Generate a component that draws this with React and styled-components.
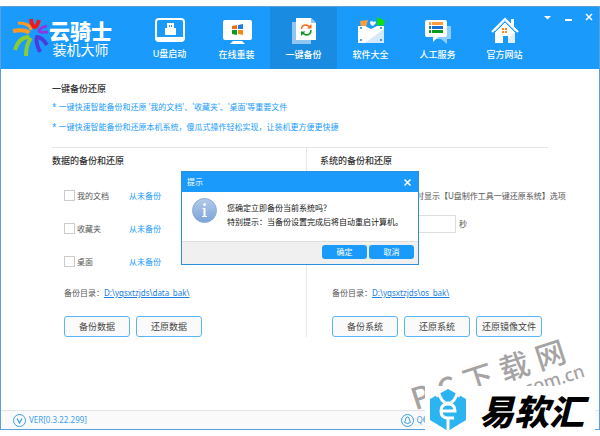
import styled, { createGlobalStyle } from 'styled-components';

const GlobalStyle = createGlobalStyle`
  * {
    box-sizing: border-box;
  }

  body {
    margin: 0;
    background-color: #fff;
    color: #555;
    font-family: 'Noto Sans', 'Noto Sans CJK SC', sans-serif;
    font-size: 8px;
    line-height: 12px;
  }

  button,
  input {
    font-family: inherit;
  }
`;

const Page = styled.div`
  position: relative;
  padding: 6px 0;
  overflow: hidden;
`;

const Window = styled.div`
  position: relative;
  display: flex;
  flex-direction: column;
  border: 1px solid #5aa0dc;
  background-color: #fff;
`;

const Header = styled.header`
  display: flex;
  height: 62px;
  background-color: #1a9bfb;
  color: #fff;
`;

const Brand = styled.div`
  display: flex;
  align-items: center;
  width: 135px;
  padding-left: 11px;
`;

const BrandName = styled.div`
  display: flex;
  flex-direction: column;
  align-items: center;
`;

const BrandTitle = styled.strong`
  font-family: 'Noto Sans CJK SC', sans-serif;
  font-size: 21px;
  font-weight: 900;
  line-height: 22px;
`;

const BrandSubtitle = styled.span`
  font-family: 'Noto Sans CJK SC', sans-serif;
  font-size: 14px;
  line-height: 16px;
`;

const Nav = styled.nav`
  display: flex;
`;

const NavItem = styled.a`
  display: flex;
  flex-direction: column;
  align-items: center;
  gap: 5px;
  width: 67px;
  padding-top: 8px;
  background-color: ${({ $active }) => ($active ? '#198be0' : 'transparent')};
  color: #fff;
  font-size: 9px;
  font-weight: 500;
  line-height: 12px;
  text-decoration: none;
`;

const WindowControls = styled.div`
  display: flex;
  gap: 9px;
  margin-left: auto;
  padding: 4px 4px 0 0;
`;

const ControlButton = styled.button`
  display: flex;
  padding: 0;
  border: 0;
  background: none;
  color: #fff;
`;

const Content = styled.main`
  min-height: 341px;
  padding: 14px 51px 0;
`;

const Title = styled.h1`
  margin: 0 0 2px;
  color: #333;
  font-size: 9px;
  font-weight: 500;
  line-height: 12px;
`;

const Tips = styled.ul`
  margin: 0 0 10px;
  padding: 0;
  list-style: none;
  color: #1a9bfb;
  line-height: 20px;
`;

const Columns = styled.div`
  display: flex;
  border-top: 1px solid #e4e4e4;
`;

const Column = styled.section`
  display: flex;
  flex-direction: column;
  flex: ${({ $grow }) => $grow};
  min-width: 0;
  white-space: nowrap;

  & + & {
    padding-left: 13px;
    border-left: 1px solid #e8e8e8;
  }
`;

const ColumnTitle = styled.h2`
  margin: 5px 0 10px;
  color: #333;
  font-size: 9px;
  font-weight: 500;
  line-height: 16px;
`;

const ColumnBody = styled.div`
  display: flex;
  flex-direction: column;
  flex: 1;
  padding-left: 12px;
`;

const Row = styled.div`
  display: flex;
  align-items: center;
  height: ${({ $compact }) => ($compact ? '23px' : '33px')};
`;

const CheckLabel = styled.label`
  display: flex;
  align-items: center;
  gap: 2px;
  min-width: 65px;
`;

const Checkbox = styled.input`
  width: 11px;
  height: 11px;
  margin: 0;
  appearance: none;
  border: 1px solid #ccc;
  background-color: #fff;
`;

const Status = styled.span`
  color: #1a9bfb;
`;

const DelayLabel = styled.label`
  margin-right: 4px;
`;

const DelayInput = styled.input`
  width: 80px;
  height: 18px;
  margin-right: 3px;
  border: 1px solid #ddd;
  font-size: 8px;
`;

const Directory = styled.p`
  margin: auto 0 8px;
  line-height: 30px;
`;

const DirectoryLink = styled.a`
  color: #1a80e6;
`;

const Actions = styled.div`
  display: flex;
  gap: 6px;
`;

const ActionButton = styled.button`
  width: 66px;
  height: 21px;
  padding: 0;
  border: 1px solid #5ab4f8;
  border-radius: 3px;
  background-color: #fafafa;
  color: #444;
  font-size: 9px;
  line-height: 12px;
`;

const Footer = styled.footer`
  display: flex;
  align-items: center;
  justify-content: space-between;
  height: 19px;
  padding: 0 162px 0 12px;
  border-top: 1px solid #e4e4e4;
  background-color: #fafafa;
  color: #3a9fee;
`;

const FooterItem = styled.span`
  display: flex;
  align-items: center;
  gap: 3px;
  font-size: 8px;
`;

const Overlay = styled.div`
  position: absolute;
  inset: 0;
  display: grid;
  place-items: center;
`;

const Dialog = styled.div`
  width: 238px;
  border: 1px solid #2d8fdc;
  background-color: #fff;
  color: #111;
`;

const DialogHeader = styled.div`
  display: flex;
  align-items: center;
  justify-content: space-between;
  height: 20px;
  padding: 0 6px 0 5px;
  background-color: #1a9bfb;
  color: #fff;
`;

const DialogBody = styled.div`
  display: flex;
  gap: 10px;
  height: 49px;
  padding: 6px 10px;
`;

const DialogMessage = styled.p`
  margin: 3px 0 0;
  line-height: 14px;
`;

const DialogFooter = styled.div`
  display: flex;
  justify-content: flex-end;
  gap: 2px;
  padding: 3px 4px 5px;
  border-top: 1px solid #ddd;
  background-color: #f0f0f0;
`;

const DialogButton = styled.button`
  width: 45px;
  height: 14px;
  padding: 0;
  border: 0;
  border-radius: 3px;
  background-color: #1a9bfb;
  color: #fff;
  font-size: 8px;
  line-height: 12px;
`;

const Watermark = styled.div`
  position: absolute;
  right: 17px;
  bottom: 29px;
  display: flex;
  flex-direction: column;
  align-items: flex-end;
  color: #a5a3a3;
  font-weight: 500;
  transform: rotate(-18deg);
  pointer-events: none;
`;

const WatermarkName = styled.div`
  display: flex;
  gap: 8px;
  padding-right: 12px;
  font-family: 'Noto Sans CJK SC', sans-serif;
  font-size: 30px;
  line-height: 32px;
`;

const WatermarkSite = styled.div`
  font-size: 18px;
  line-height: 20px;
`;

const Badge = styled.div`
  position: absolute;
  right: 5px;
  bottom: 0;
  display: flex;
  align-items: center;
  gap: 12px;
  width: 170px;
  height: 50px;
  padding: 0 0 2px 4px;
  background-color: #fff;
`;

const BadgeName = styled.strong`
  color: #000;
  font-family: 'Noto Sans CJK SC', sans-serif;
  font-size: 35px;
  font-style: italic;
  font-weight: 900;
  line-height: 40px;
  white-space: nowrap;
`;

const BrandMark = () => (
  <svg width="37" height="40" viewBox="12 18 37 40" fill="none">
    <path d="M31 19q1 8 4 8q2 0 4-7" stroke="#f01818" strokeWidth="4" />
    <path d="M18 23q12 0 13 7" stroke="#ff9820" strokeWidth="3" />
    <path d="M13 31q12-2 16 2" stroke="#ff9820" strokeWidth="4" />
    <path d="M47 26q-8 2-8 5q1 2 9 1" stroke="#8a3be0" strokeWidth="3" />
    <path d="M15 50q4-13 14-13" stroke="#8ccc30" strokeWidth="4" />
    <path d="M26 56q0-12 5-18" stroke="#8ccc30" strokeWidth="4" />
    <path d="M40 52q-5-11-3-15q5 0 10 8" stroke="#4a3be0" strokeWidth="4" />
  </svg>
);

const UsbIcon = () => (
  <svg width="30" height="28" viewBox="0 0 30 28">
    <rect x="1" y="4" width="28" height="22" rx="3" fill="none" stroke="#fff" strokeWidth="2" />
    <path d="M2 22h26v3a2 2 0 0 1-2 2H4a2 2 0 0 1-2-2z" fill="#fff" />
    <path d="M12 8h7v5h2v7H10v-7h2z" fill="#fff" />
    <path d="M14 10h1v2h-1zM16 10h1v2h-1z" fill="#1a9bfb" />
  </svg>
);

const MonitorIcon = () => (
  <svg width="30" height="29" viewBox="0 0 30 29">
    <rect x="1" y="5" width="29" height="20" rx="2" fill="#fff" />
    <path d="M11 26h9l3 3H8z" fill="#fff" />
    <path d="M10 11l5-1v4h-5z" fill="#f26a1b" />
    <path d="M16 10l5-1v5h-5z" fill="#1f7fd8" />
    <path d="M10 15h5v5l-5-1z" fill="#0a9a1e" />
    <path d="M16 15h5v5l-5-1z" fill="#f28a1b" />
  </svg>
);

const BackupIcon = () => (
  <svg width="26" height="29" viewBox="0 0 26 29">
    <path d="M1 7h19v22H1z" fill="#8fc6f2" />
    <path d="M5 3h15l5 5v17H5z" fill="#fff" />
    <path d="M20 3v5h5z" fill="#8fc6f2" />
    <path d="M10.500 14q0-4 5-4l3 1.500" fill="none" stroke="#f26a1b" strokeWidth="1.500" />
    <path d="M20.500 9v4.500H16z" fill="#f26a1b" />
    <path d="M20 15q0 5-5 5l-3-1.500" fill="none" stroke="#0a9a1e" strokeWidth="1.500" />
    <path d="M10 21v-4.500h4.500z" fill="#0a9a1e" />
  </svg>
);

const SoftwareIcon = () => (
  <svg width="28" height="29" viewBox="0 0 28 29">
    <path d="M3 6l8-1-2 7H4z" fill="#ff9e3a" />
    <path d="M20 2l8 4-2 5-6-1z" fill="#0be00b" />
    <path d="M13 7q2-2 3 0q3-2 3 1l-3 3q-3-1-3-4z" fill="#fff" />
    <path d="M1 11h7l6 3 6-3h7v17H1z" fill="#fff" />
    <path d="M27 14v14H8z" fill="#d5e9fa" />
    <g fill="#1a80d8">
      <circle cx="4" cy="13" r="1" />
      <circle cx="24" cy="13" r="1" />
      <circle cx="4" cy="25" r="1" />
      <circle cx="24" cy="25" r="1" />
    </g>
  </svg>
);

const ServiceIcon = () => (
  <svg width="28" height="29" viewBox="0 0 28 29">
    <path d="M23 11h4v13h-4v5l-6-5h-5v-4h11z" fill="#8fcbfb" />
    <path d="M3 5h18a2 2 0 0 1 2 2v13a2 2 0 0 1-2 2h-7l-5 5v-5H3a2 2 0 0 1-2-2V7a2 2 0 0 1 2-2z" fill="#fff" />
    <path d="M5 7h2v3H5zM8 7h11v3H8z" fill="#ff9e3a" />
    <path d="M5 11h2v3H5zM8 11h11v3H8z" fill="#1a6fd0" />
    <path d="M5 15h2v3H5zM8 15h11v3H8z" fill="#0a9a1e" />
  </svg>
);

const HomeIcon = () => (
  <svg width="28" height="29" viewBox="0 0 28 29">
    <path d="M20 4h3v8h-3z" fill="#fff" />
    <path d="M14 6L24 16v12H4V16z" fill="#fff" />
    <path d="M1 17L14 4l13 13" fill="none" stroke="#fff" strokeWidth="2" />
    <path d="M3 18L14 7l11 11" fill="none" stroke="#1a9bfb" />
    <path d="M24 17v11H12z" fill="#e2effa" />
    <path d="M12 21h5v7h-5z" fill="#1a9bfb" />
    <path d="M11 13h2v2h-2zM14 13h2v2h-2zM11 16h2v2h-2zM14 16h2v2h-2z" fill="#f28a1b" />
  </svg>
);

const CloseIcon = () => (
  <svg width="9" height="9" viewBox="0 0 9 9">
    <path d="M1.500 1.500l6 6M7.500 1.500l-6 6" stroke="#fff" strokeWidth="1.500" />
  </svg>
);

const InfoIcon = () => (
  <svg width="25" height="25" viewBox="0 0 25 25">
    <defs>
      <linearGradient id="info" x1="0" y1="0" x2="0" y2="1">
        <stop offset="0" stopColor="#b4cbea" />
        <stop offset="1" stopColor="#7ba3d8" />
      </linearGradient>
    </defs>
    <circle cx="12.5" cy="12.5" r="12" fill="url(#info)" stroke="#8cacd6" />
    <circle cx="12.5" cy="6.5" r="1.5" fill="#fff" />
    <path d="M10.500 10h3v8h1.500v1h-5v-1h1.500v-7h-1z" fill="#fff" />
  </svg>
);

const VersionIcon = () => (
  <svg width="13" height="13" viewBox="0 0 13 13" fill="none" stroke="#3a9fee">
    <circle cx="6.5" cy="6.5" r="6" />
    <path d="M4 4.500l2.500 4.500L9 4.500" strokeWidth="1.300" />
  </svg>
);

const ChatIcon = () => (
  <svg width="13" height="13" viewBox="0 0 13 13" fill="none" stroke="#3a9fee">
    <circle cx="6.500" cy="6.500" r="6" />
    <path d="M4.500 6q0-3 2-3t2 3l1 2.500-1.500.5q-1.500 1-3 0L3.500 8.500z" />
  </svg>
);

const BadgeMark = () => (
  <svg width="38" height="42" viewBox="0 0 38 42">
    <path d="M19 0l18 10v21L19 42 1 31V10z" fill="#2cb4f0" />
    <path d="M5 0l5 7M33 0l-5 7" stroke="#fff" strokeWidth="5" />
    <path d="M9 4l4 7 3 3h6l3-3 4-7" fill="none" stroke="#fff" strokeWidth="3" />
    <path d="M12 22h14q0-7-7-7t-7 7q0 7 7 7h6" fill="none" stroke="#fff" strokeWidth="3" />
    <path d="M19 29v13" stroke="#fff" strokeWidth="3" />
  </svg>
);

const navItems = [
  { label: 'U盘启动', Icon: UsbIcon },
  { label: '在线重装', Icon: MonitorIcon },
  { label: '一键备份', Icon: BackupIcon, active: true },
  { label: '软件大全', Icon: SoftwareIcon },
  { label: '人工服务', Icon: ServiceIcon },
  { label: '官方网站', Icon: HomeIcon },
];

const dataItems = ['我的文档', '收藏夹', '桌面'];

const App = () => {
  return (
    <Page>
      <GlobalStyle />
      <Window>
        <Header>
          <Brand>
            <BrandMark />
            <BrandName>
              <BrandTitle>云骑士</BrandTitle>
              <BrandSubtitle>装机大师</BrandSubtitle>
            </BrandName>
          </Brand>
          <Nav>
            {navItems.map(({ label, Icon, active }) => (
              <NavItem key={label} href="#" $active={active}>
                <Icon />
                {label}
              </NavItem>
            ))}
          </Nav>
          <WindowControls>
            <ControlButton aria-label="菜单">
              <svg width="12" height="12" viewBox="0 0 12 12">
                <path d="M3 5h7L6.500 8.500z" fill="#fff" />
              </svg>
            </ControlButton>
            <ControlButton aria-label="最小化">
              <svg width="12" height="12" viewBox="0 0 12 12">
                <path d="M3 8h7v2H3z" fill="#fff" />
              </svg>
            </ControlButton>
            <ControlButton aria-label="关闭">
              <svg width="12" height="12" viewBox="0 0 12 12">
                <path d="M3 3l6 6M9 3L3 9" stroke="#fff" strokeWidth="1.500" />
              </svg>
            </ControlButton>
          </WindowControls>
        </Header>

        <Content>
          <Title>一键备份还原</Title>
          <Tips>
            <li>* 一键快速智能备份和还原 '我的文档'、'收藏夹'、'桌面'等重要文件</li>
            <li>* 一键快速智能备份和还原本机系统，傻瓜式操作轻松实现，让装机更方便更快捷</li>
          </Tips>

          <Columns>
            <Column $grow={254}>
              <ColumnTitle>数据的备份和还原</ColumnTitle>
              <ColumnBody>
                {dataItems.map((item) => (
                  <Row key={item}>
                    <CheckLabel>
                      <Checkbox type="checkbox" />
                      {item}
                    </CheckLabel>
                    <Status>从未备份</Status>
                  </Row>
                ))}
                <Directory>
                  备份目录：<DirectoryLink href="#">D:\yqsxtzjds\data_bak\</DirectoryLink>
                </Directory>
                <Actions>
                  <ActionButton>备份数据</ActionButton>
                  <ActionButton>还原数据</ActionButton>
                </Actions>
              </ColumnBody>
            </Column>

            <Column $grow={228}>
              <ColumnTitle>系统的备份和还原</ColumnTitle>
              <ColumnBody>
                <Row>
                  <CheckLabel>
                    <Checkbox type="checkbox" />
                    勾选后在每次启动电脑时显示【U盘制作工具一键还原系统】选项
                  </CheckLabel>
                </Row>
                <Row $compact>
                  <DelayLabel htmlFor="delay">等待时间：</DelayLabel>
                  <DelayInput id="delay" type="text" />
                  秒
                </Row>
                <Directory>
                  备份目录：<DirectoryLink href="#">D:\yqsxtzjds\os_bak\</DirectoryLink>
                </Directory>
                <Actions>
                  <ActionButton>备份系统</ActionButton>
                  <ActionButton>还原系统</ActionButton>
                  <ActionButton>还原镜像文件</ActionButton>
                </Actions>
              </ColumnBody>
            </Column>
          </Columns>
        </Content>

        <Footer>
          <FooterItem>
            <VersionIcon />
            VER[0.3.22.299]
          </FooterItem>
          <FooterItem>
            <ChatIcon />
            QQ群
          </FooterItem>
        </Footer>

        <Overlay>
          <Dialog role="dialog" aria-labelledby="dialog-title">
            <DialogHeader>
              <span id="dialog-title">提示</span>
              <ControlButton aria-label="关闭提示">
                <CloseIcon />
              </ControlButton>
            </DialogHeader>
            <DialogBody>
              <InfoIcon />
              <DialogMessage>
                您确定立即备份当前系统吗？
                <br />
                特别提示：当备份设置完成后将自动重启计算机。
              </DialogMessage>
            </DialogBody>
            <DialogFooter>
              <DialogButton>确定</DialogButton>
              <DialogButton>取消</DialogButton>
            </DialogFooter>
          </Dialog>
        </Overlay>
      </Window>

      <Watermark>
        <WatermarkName>
          <span>P</span>
          <span>C</span>
          <span>下</span>
          <span>载</span>
          <span>网</span>
        </WatermarkName>
        <WatermarkSite>www.pcsoft.com.cn</WatermarkSite>
      </Watermark>

      <Badge>
        <BadgeMark />
        <BadgeName>易软汇</BadgeName>
      </Badge>
    </Page>
  );
};

export default App;
